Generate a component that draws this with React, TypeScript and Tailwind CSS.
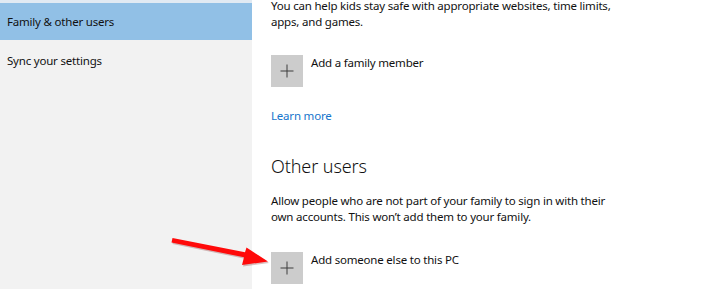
import React from "react";

function PlusBox() {
  return (
    <div className="w-[32px] h-[32px] bg-[#cccccc] flex items-center justify-center shrink-0">
      <svg width="14" height="14" viewBox="0 0 14 14">
        <path d="M7 0.5V13.5M0.5 7H13.5" stroke="#3c3c3c" strokeWidth="1" fill="none" />
      </svg>
    </div>
  );
}

export default function App() {
  const font = { fontFamily: '"Noto Sans", "Open Sans", sans-serif' };
  return (
    <div className="relative w-[720px] h-[289px] overflow-hidden flex bg-white text-[#000]" style={font}>
      <div className="w-[252px] h-full bg-[#f2f2f2] flex flex-col shrink-0">
        <div className="h-[3px] bg-[#e1eaf3]" />
        <div className="h-[37px] bg-[#91c0e6] flex items-center pl-[7px] text-[11.5px] tracking-[-0.2px] text-[#111]">
          Family &amp; other users
        </div>
        <div className="h-[41px] flex items-center pl-[7px] text-[11.5px] tracking-[-0.2px] text-[#111]">
          Sync your settings
        </div>
      </div>
      <div className="flex-1 pl-[19px] flex flex-col text-[11.5px] tracking-[-0.2px] leading-[16px] text-[#111]">
        <p className="mt-[-2px] whitespace-nowrap">
          You can help kids stay safe with appropriate websites, time limits,
          <br />
          apps, and games.
        </p>
        <div className="mt-[25px] flex items-start gap-[8px]">
          <PlusBox />
          <span>Add a family member</span>
        </div>
        <div className="mt-[21px] text-[#1675cc]">Learn more</div>
        <h2 className="mt-[30px] text-[18px] leading-[24px] tracking-[-0.1px] font-light text-[#111]">Other users</h2>
        <p className="mt-[15px] whitespace-nowrap">
          Allow people who are not part of your family to sign in with their
          <br />
          own accounts. This won’t add them to your family.
        </p>
        <div className="mt-[27px] flex items-start gap-[8px]">
          <PlusBox />
          <span>Add someone else to this PC</span>
        </div>
      </div>
      <svg className="absolute left-0 top-0 pointer-events-none" width="720" height="289" viewBox="0 0 720 289">
        <path
          d="M172.5 238 L245 252.3 L246.5 247.5 L268 261.5 L242 265 L244 257.3 L171.5 242.5 Z"
          fill="#6a0000"
          opacity="0.25"
          transform="translate(1,1.5)"
        />
        <path
          d="M172.5 238 L245 252.3 L246.5 247.5 L268 261.5 L242 265 L244 257.3 L171.5 242.5 Z"
          fill="#ff0a0a"
        />
      </svg>
    </div>
  );
}
